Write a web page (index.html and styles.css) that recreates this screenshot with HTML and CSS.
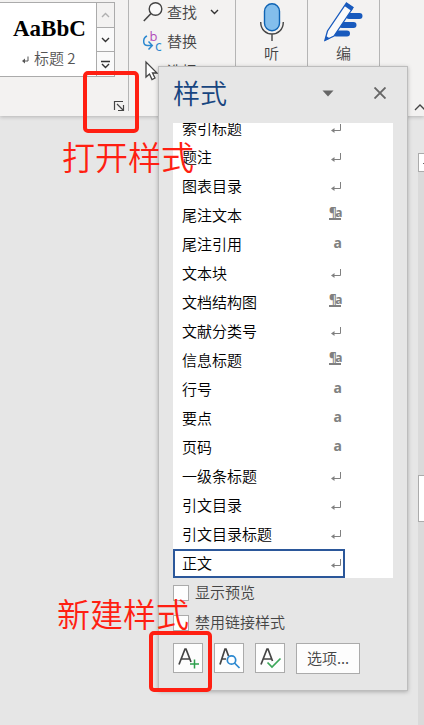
FILE: index.html
```html
<!DOCTYPE html>
<html lang="zh-CN">
<head>
<meta charset="utf-8">
<title>样式</title>
<link rel="stylesheet" href="styles.css">
</head>
<body>
<svg class="defs" width="0" height="0">
  <symbol id="enter" viewBox="0 0 10 10"><path d="M9.500 0V6.500H1.500" fill="none" stroke="#808080"/><path d="M0 6.500L3.500 4V9Z" fill="#808080"/></symbol>
</svg>
<header class="ribbon">
  <section class="group styles-group">
    <div class="gallery">
      <div class="style-card">
        <div class="sample">AaBbC</div>
        <div class="style-name"><svg width="7" height="8" viewBox="0 0 7 8"><path d="M6 0.5V5H1.5" fill="none" stroke="#555"/><path d="M0 5L3 2.5V7.5Z" fill="#555"/></svg><span>标题 2</span></div>
      </div>
      <div class="gallery-nav">
        <div class="nav dim"><svg width="9" height="6" viewBox="0 0 9 6"><path d="M1 5L4.5 1.5L8 5"/></svg></div>
        <div class="nav"><svg width="9" height="6" viewBox="0 0 9 6"><path d="M1 1L4.5 4.5L8 1"/></svg></div>
        <div class="nav"><svg width="9" height="9" viewBox="0 0 9 9"><path d="M0 1.5H9M1 4L4.5 7.5L8 4"/></svg></div>
      </div>
    </div>
    <svg class="launcher" width="12" height="12" viewBox="0 0 12 12"><path d="M1.500 10V1.500H10M4 4L10 10M10.500 5V10.500H5" fill="none" stroke="#444" stroke-width="1.200"/></svg>
  </section>
  <section class="group edit-group">
    <div class="command"><svg width="20" height="22" viewBox="0 0 20 22"><circle cx="12.500" cy="8" r="6.300" fill="#fafafa" stroke="#444" stroke-width="1.400"/><path d="M8 12.500L0.800 20" stroke="#444" stroke-width="1.600"/></svg><span>查找</span><svg class="drop" width="9" height="6" viewBox="0 0 9 6"><path d="M1 1L4.500 4.500L8 1"/></svg></div>
    <div class="command"><svg width="20" height="22" viewBox="0 0 20 22"><text x="6.500" y="10.500" class="letter-b">b</text><text x="12" y="20.500" class="letter-c">c</text><path d="M4 6C-0.500 8 -0.500 15.500 4.500 15.500H9M5.500 11.500L9.300 15.500L5.500 19.500" fill="none" stroke="#2b88d0" stroke-width="1.500"/></svg><span>替换</span></div>
    <div class="command"><svg width="20" height="22" viewBox="0 0 20 22"><path d="M3 2V17L6.500 14L9 19.500L12 18L9.500 13H14Z" fill="#fff" stroke="#444" stroke-width="1.300"/></svg><span>选择</span></div>
  </section>
  <section class="group tall-group">
    <svg width="26" height="40" viewBox="0 0 26 40"><rect x="5.500" y="1.700" width="15" height="27" rx="7.500" fill="#83beec" stroke="#0f64b4" stroke-width="1.400"/><path d="M1.700 20C1.700 36 24.300 36 24.300 20M13 32V39" fill="none" stroke="#444" stroke-width="1.400"/></svg>
    <span>听</span>
  </section>
  <section class="group tall-group">
    <svg class="editor-icon" width="40" height="40" viewBox="0 0 40 40"><path d="M25 14H35.500M18 23H29.500M12 31.500H23" stroke="#185abd" stroke-width="6" stroke-linecap="round"/><path d="M22.500 1L29 5.500L26.500 9.500L10 34L0.800 38.500L3.500 29Z" fill="#fafafa" stroke="#185abd" stroke-width="1.300"/><path d="M22.500 1L29.500 5.500L27.500 9L20.500 4Z" fill="#185abd"/><path d="M2 34L6 36.500L0.800 39Z" fill="#185abd"/></svg>
    <span>编</span>
  </section>
  <svg class="collapse" width="12" height="7" viewBox="0 0 12 7"><path d="M1 6L6 1L11 6" fill="none" stroke="#444" stroke-width="1.300"/></svg>
</header>
<main class="workspace">
  <div class="scrollbar"><div class="ruler-toggle"><svg width="5" height="1"><rect width="5" height="1" fill="#666"/></svg></div><div class="thumb"></div></div>
</main>

<aside class="pane">
  <div class="pane-head"><h1>样式</h1><svg width="12" height="7" viewBox="0 0 12 7"><path d="M0.500 0.500H11.500L6 6.500Z" fill="#666"/></svg><svg class="close" width="12" height="12" viewBox="0 0 12 12"><path d="M0.500 0.500L11.500 11.500M11.500 0.500L0.500 11.500" stroke="#666" stroke-width="1.900"/></svg></div>
  <div class="list">
    <div class="row"><span>索引标题</span><svg width="10" height="10"><use href="#enter"/></svg></div>
    <div class="row"><span>题注</span><svg width="10" height="10"><use href="#enter"/></svg></div>
    <div class="row"><span>图表目录</span><svg width="10" height="10"><use href="#enter"/></svg></div>
    <div class="row"><span>尾注文本</span><b class="linked">¶a</b></div>
    <div class="row"><span>尾注引用</span><b>a</b></div>
    <div class="row"><span>文本块</span><svg width="10" height="10"><use href="#enter"/></svg></div>
    <div class="row"><span>文档结构图</span><b class="linked">¶a</b></div>
    <div class="row"><span>文献分类号</span><svg width="10" height="10"><use href="#enter"/></svg></div>
    <div class="row"><span>信息标题</span><b class="linked">¶a</b></div>
    <div class="row"><span>行号</span><b>a</b></div>
    <div class="row"><span>要点</span><b>a</b></div>
    <div class="row"><span>页码</span><b>a</b></div>
    <div class="row"><span>一级条标题</span><svg width="10" height="10"><use href="#enter"/></svg></div>
    <div class="row"><span>引文目录</span><svg width="10" height="10"><use href="#enter"/></svg></div>
    <div class="row"><span>引文目录标题</span><svg width="10" height="10"><use href="#enter"/></svg></div>
    <div class="row selected"><span>正文</span><svg width="10" height="10"><use href="#enter"/></svg></div>
  </div>
  <div class="check"><i></i><span>显示预览</span></div>
  <div class="check"><i></i><span>禁用链接样式</span></div>
  <div class="actions">
    <div class="btn"><svg width="28" height="28" viewBox="0 0 28 28"><path class="a" d="M5 20.500L11 5H12L17 18M7.500 15H15.500"/><path d="M20.500 15.500V24.500M16 20H25" stroke="#2da04c" stroke-width="1.500"/></svg></div>
    <div class="btn"><svg width="28" height="28" viewBox="0 0 28 28"><path class="a" d="M5 20.500L10 5H11L13.500 12M7 15H11"/><circle cx="16.500" cy="16" r="4.200" fill="#fff" stroke="#2b88d0" stroke-width="1.700"/><path d="M19.500 19L24.500 24" stroke="#2b88d0" stroke-width="1.700"/></svg></div>
    <div class="btn"><svg width="28" height="28" viewBox="0 0 28 28"><path class="a" d="M5 20.500L11 5H12L16.500 17M7.500 15H15.500"/><path d="M11.500 18.500L16 23L24.500 14.500" fill="none" stroke="#3ca75a" stroke-width="1.700"/></svg></div>
    <div class="btn options">选项...</div>
  </div>
</aside>

<div class="mark mark-open"></div>
<div class="note note-open">打开样式</div>
<div class="mark mark-new"></div>
<div class="note note-new">新建样式</div>
</body>
</html>
```
FILE: styles.css
```css
* { box-sizing: border-box; }
body {
  margin: 0; width: 424px; height: 725px; position: relative; overflow: hidden;
  background: #e6e6e6; color: #444;
  font: 350 15px/20px "Noto Sans CJK SC", sans-serif;
}
svg { display: block; flex: none; }
.defs { position: absolute; }
.ribbon {
  display: flex; height: 116px; background: #f3f2f1; position: relative;
  box-shadow: 0 1px 4px rgba(0,0,0,.22);
}
.group { border-right: 1px solid #b5b5b5; height: 111px; flex: none; }
.styles-group { width: 129px; display: flex; flex-direction: column; }
.gallery { display: flex; flex: none; width: 115px; height: 75px; margin-top: 2px; border: 1px solid #ababab; border-left: 0; background: #fff; }
.style-card { width: 96px; padding-top: 10px; }
.sample { font: bold 23px/32px "Liberation Serif", serif; color: #000; padding-left: 13px; }
.style-name { display: flex; align-items: center; gap: 5px; padding: 3px 0 0 22px; font-size: 15px; color: #555; white-space: nowrap; }
.style-name svg { margin-top: 3px; }
.gallery-nav { width: 18px; border-left: 1px solid #ababab; display: flex; flex-direction: column; background: #f3f2f1; }
.nav { flex: 1; display: flex; align-items: center; justify-content: center; }
.nav + .nav { border-top: 1px solid #ababab; background: #fafafa; }
.nav path, .drop path { fill: none; stroke: #333; stroke-width: 1.4; }
.nav.dim path { stroke: #b0b0b0; }
.launcher { margin: 23px 0 0 113px; }
.edit-group { width: 107px; padding: 0 0 0 14px; }
.command { display: flex; align-items: center; height: 25px; font-size: 15px; gap: 4px; }
.command:first-child { height: 24px; }
.command:nth-child(2) { height: 34px; }
.command .drop { margin-left: 9px; }
.letter-b { font: 13px "Open Sans", sans-serif; fill: #b14cba; }
.letter-c { font: 14px "Open Sans", sans-serif; fill: #2b88d0; }
.tall-group { width: 72px; display: flex; flex-direction: column; align-items: center; padding-top: 2px; font-size: 15px; }
.tall-group svg { margin-bottom: 1px; }
.collapse { margin: 104px 0 0 34px; }
.workspace { display: flex; justify-content: flex-end; height: 609px; padding-top: 37px; }
.scrollbar { width: 6px; background: #dadada; }
.ruler-toggle { width: 12px; height: 19px; border: 1px solid #ababab; background: #fff; padding: 9px 0 0 4px; }
.thumb { width: 12px; height: 47px; margin-top: 303px; background: #fff; border: 1px solid #ababab; }
.pane {
  position: absolute; left: 158px; top: 66px; width: 250px; height: 625px;
  padding: 0 14px; background: #e6e6e6; border: 1px solid #bdbdbd;
  box-shadow: 0 1px 4px rgba(0,0,0,.25);
}
.pane-head { display: flex; align-items: center; height: 56px; padding-bottom: 4px; }
.pane-head h1 { margin: 0; width: 149px; font: 350 27px/40px "Noto Sans CJK SC", sans-serif; color: #174580; }
.close { margin-left: 40px; }
.list { width: 220px; height: 455px; background: #fff; overflow: hidden; display: flex; flex-direction: column; justify-content: flex-end; color: #000; }
.row { flex: none; display: flex; align-items: center; justify-content: space-between; width: 172px; height: 29px; padding: 0 4px 0 9px; }
.row span { margin-top: -1px; }
.row b { font: bold 14px/14px "Noto Sans", sans-serif; color: #808080; margin-top: -4px; margin-right: -1px; }
.row .linked { font-size: 12px; line-height: 10px; border-bottom: 2px solid #808080; margin-right: 0; width: 12px; letter-spacing: -1.5px; }
.selected { border: 2px solid #2b579a; padding: 0 2px 0 7px; }
.check { display: flex; align-items: center; gap: 6px; height: 30px; white-space: nowrap; }
.check span { margin-top: -2px; }
.check i { width: 16px; height: 16px; background: #fefefe; border: 1px solid #ababab; }
.actions { display: flex; gap: 11px; margin-top: 5px; }
.btn { width: 30px; height: 30px; border: 1px solid #ababab; background: #fdfdfd; }
.btn .a { fill: none; stroke: #444; stroke-width: 1.7; }
.options { width: 64px; height: 31px; text-align: center; line-height: 27px; }
.mark { position: absolute; border: 4px solid #ff1f12; border-radius: 5px; }
.mark-open { left: 83px; top: 71px; width: 56px; height: 62px; }
.mark-new { left: 149px; top: 631px; width: 63px; height: 61px; }
.note { position: absolute; color: #ff1f12; font-size: 33px; line-height: 40px; white-space: nowrap; }
.note-open { left: 62px; top: 136px; }
.note-new { left: 57px; top: 593px; }
```
